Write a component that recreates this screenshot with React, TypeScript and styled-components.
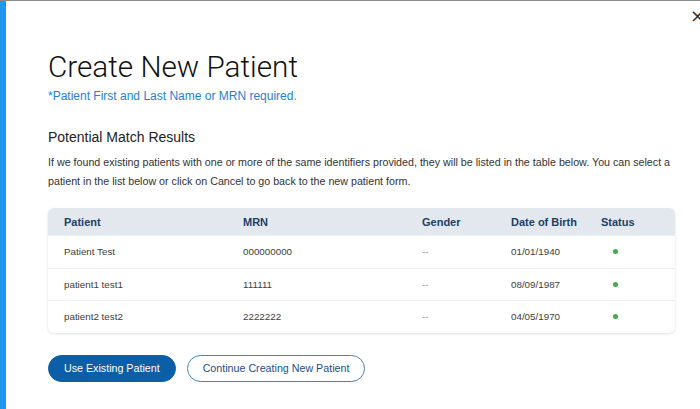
import React from 'react'
import styled, { createGlobalStyle } from 'styled-components'

const GlobalStyle = createGlobalStyle`
  html, body {
    margin: 0;
    padding: 0;
    background: #fff;
  }
  body {
    font-family: 'Liberation Sans', Arial, sans-serif;
    color: #222;
    overflow: hidden;
  }
`

interface Match {
  name: string
  mrn: string
  gender: string
  dob: string
  active: boolean
}

const matches: Match[] = [
  { name: 'Patient Test', mrn: '000000000', gender: '--', dob: '01/01/1940', active: true },
  { name: 'patient1 test1', mrn: '111111', gender: '--', dob: '08/09/1987', active: true },
  { name: 'patient2 test2', mrn: '2222222', gender: '--', dob: '04/05/1970', active: true },
]

const App: React.FC = () => {
  return (
    <>
      <GlobalStyle />
      <StyledFrame>
        <StyledAccent />
        <StyledModal>
          <StyledClose aria-label="Close">×</StyledClose>
          <StyledTitle>Create New Patient</StyledTitle>
          <StyledRequired>*Patient First and Last Name or MRN required.</StyledRequired>
          <StyledSection>Potential Match Results</StyledSection>
          <StyledHint>
            If we found existing patients with one or more of the same identifiers provided, they will be listed in the table below. You can select a patient in the list below or click on Cancel to go back to the new patient form.
          </StyledHint>
          <StyledTable>
            <StyledHeadRow>
              <StyledHeadCell>Patient</StyledHeadCell>
              <StyledHeadCell>MRN</StyledHeadCell>
              <StyledHeadCell>Gender</StyledHeadCell>
              <StyledHeadCell>Date of Birth</StyledHeadCell>
              <StyledHeadCell>Status</StyledHeadCell>
            </StyledHeadRow>
            {matches.map((m) => (
              <StyledRow key={m.name}>
                <StyledCell>{m.name}</StyledCell>
                <StyledCell>{m.mrn}</StyledCell>
                <StyledCell muted>{m.gender}</StyledCell>
                <StyledCell>{m.dob}</StyledCell>
                <StyledCell>
                  <StyledDot active={m.active} />
                </StyledCell>
              </StyledRow>
            ))}
          </StyledTable>
          <StyledActions>
            <StyledButton primary>Use Existing Patient</StyledButton>
            <StyledButton>Continue Creating New Patient</StyledButton>
          </StyledActions>
        </StyledModal>
      </StyledFrame>
    </>
  )
}

const StyledFrame = styled.div`
  display: flex;
  width: 700px;
  height: 409px;
  box-sizing: border-box;
  border-top: 1px solid #8a8a8a;
`

const StyledAccent = styled.div`
  width: 6px;
  flex-shrink: 0;
  background: #2196f0;
`

const StyledModal = styled.div`
  position: relative;
  flex: 1;
  display: flex;
  flex-direction: column;
  padding: 48px 0 0 42px;
`

const StyledClose = styled.button`
  position: absolute;
  top: 6px;
  right: -5px;
  border: 0;
  background: none;
  padding: 0;
  font-size: 18px;
  line-height: 18px;
  color: #333;
  font-family: 'DejaVu Sans', sans-serif;
`

const StyledTitle = styled.h1`
  font-family: Roboto, 'Liberation Sans', sans-serif;
  font-weight: 300;
  font-size: 29.7px;
  line-height: 36px;
  color: #111;
  margin: 0;
`

const StyledRequired = styled.div`
  margin-top: 3px;
  font-size: 12px;
  line-height: 16px;
  color: #1f7fd8;
`

const StyledSection = styled.h3`
  margin: 24px 0 0;
  font-size: 14px;
  line-height: 18px;
  font-weight: 400;
  color: #222;
`

const StyledHint = styled.p`
  margin: 7px 0 0;
  width: 630px;
  font-size: 10.7px;
  line-height: 19px;
  color: #333;
`

const StyledTable = styled.div`
  margin-top: 17px;
  width: 627px;
  border-radius: 6px;
  background: #fff;
  box-shadow: 0 1px 3px rgba(0, 0, 0, 0.12);
  overflow: hidden;
`

const StyledHeadRow = styled.div`
  display: grid;
  grid-template-columns: 179px 179px 89px 90px 1fr;
  height: 27px;
  align-items: center;
  background: #e2e8ee;
`

const StyledHeadCell = styled.div`
  padding-left: 16px;
  font-size: 11px;
  font-weight: 700;
  color: #1c3f66;
`

const StyledRow = styled.div`
  display: grid;
  grid-template-columns: 179px 179px 89px 90px 1fr;
  box-sizing: border-box;
  height: 32.5px;
  align-items: center;
  border-top: 1px solid #eceff2;
  &:first-of-type {
    border-top: 0;
  }
`

const StyledCell = styled.div<{ muted?: boolean }>`
  padding-left: 16px;
  font-size: 9.8px;
  color: ${(props) => (props.muted ? '#999' : '#3d3d3d')};
  display: flex;
  align-items: center;
`

const StyledDot = styled.span<{ active: boolean }>`
  display: inline-block;
  width: 5px;
  height: 5px;
  margin-left: 12px;
  border-radius: 50%;
  background: ${(props) => (props.active ? '#3cae4a' : '#ccc')};
`

const StyledActions = styled.div`
  display: flex;
  gap: 11px;
  margin-top: 22px;
`

const StyledButton = styled.button<{ primary?: boolean }>`
  height: 27px;
  padding: 0 15px;
  border-radius: 14px;
  font-family: 'Liberation Sans', Arial, sans-serif;
  font-size: 10.7px;
  border: 1px solid ${(props) => (props.primary ? '#0b5ea8' : '#4d7fb5')};
  background: ${(props) => (props.primary ? '#0b5ea8' : '#fff')};
  color: ${(props) => (props.primary ? '#fff' : '#1c4f8a')};
`

export default App
